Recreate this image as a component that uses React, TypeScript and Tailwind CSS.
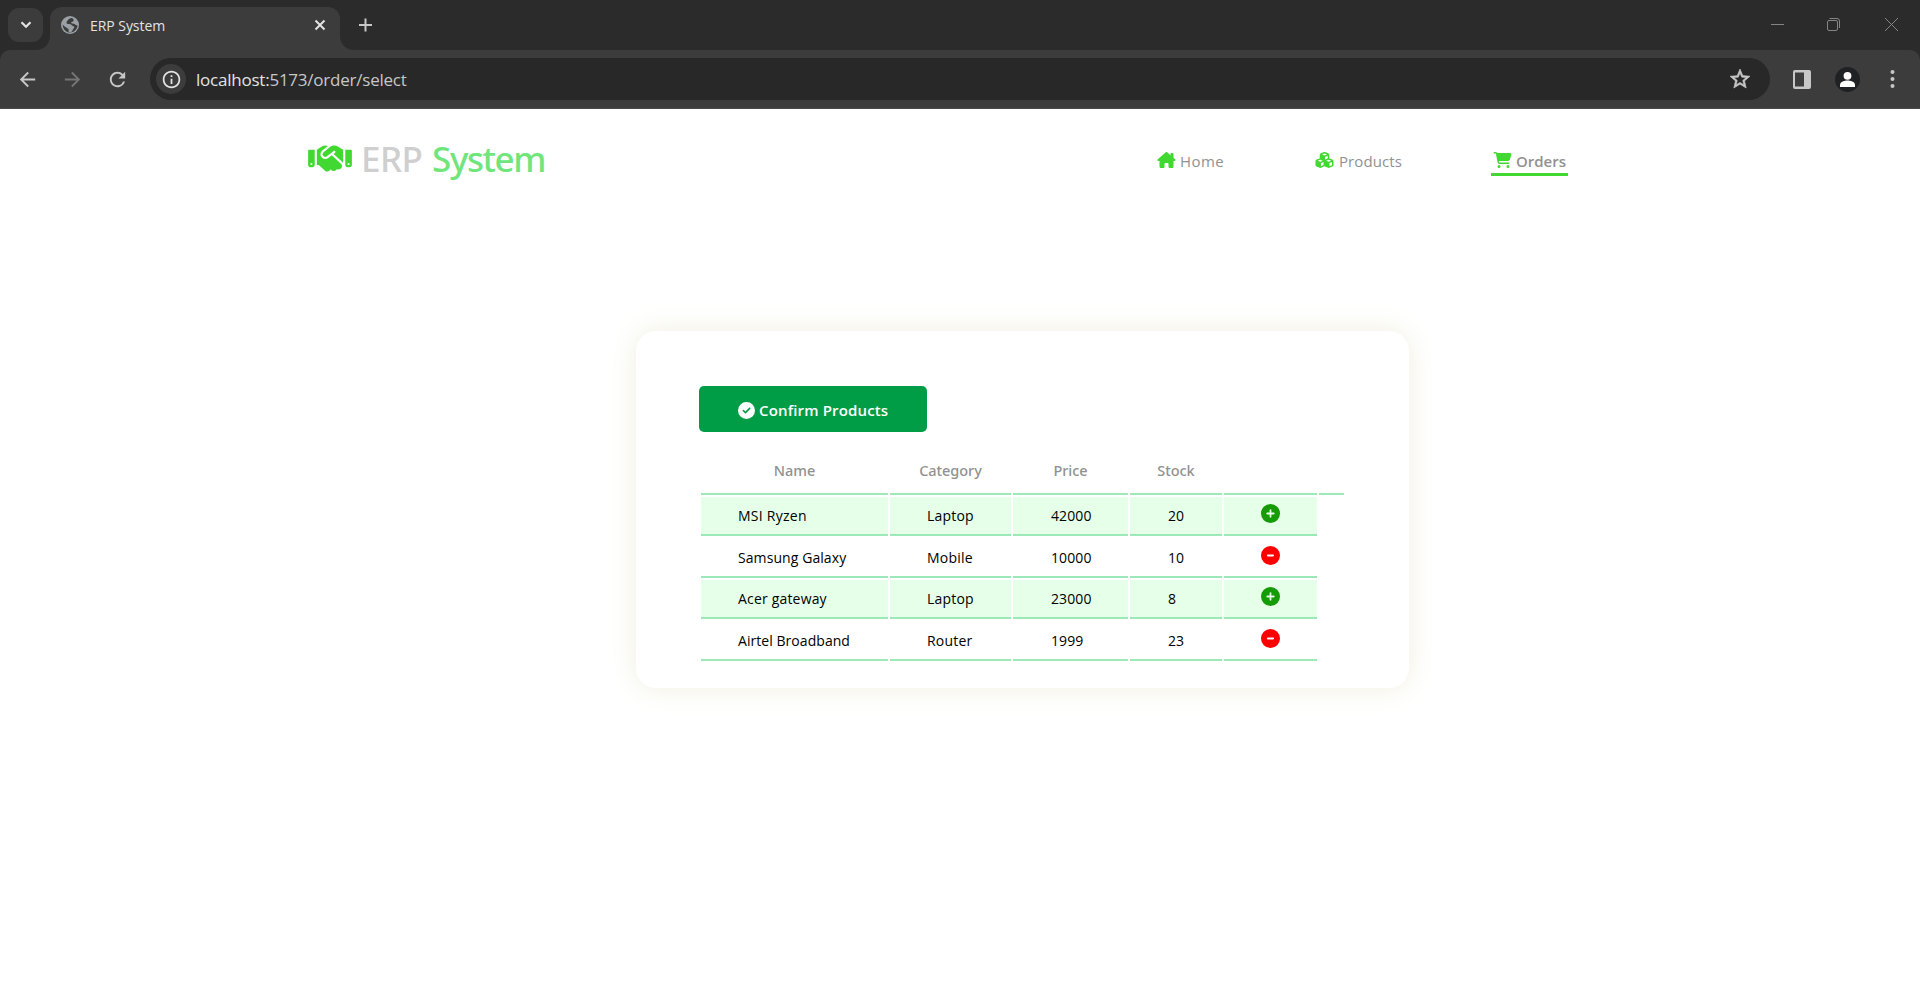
import { FaHandshake, FaHouseChimney, FaCubes, FaCartShopping, FaCircleCheck, FaCirclePlus, FaCircleMinus } from "react-icons/fa6";
import { MdOutlineInfo, MdRefresh, MdStarOutline, MdArrowBack, MdArrowForward } from "react-icons/md";

type Product = { name: string; category: string; price: string; stock: string; added: boolean; tracking: string };

const products: Product[] = [
  { name: "MSI Ryzen", category: "Laptop", price: "42000", stock: "20", added: false, tracking: "tracking-[0.25px]" },
  { name: "Samsung Galaxy", category: "Mobile", price: "10000", stock: "10", added: true, tracking: "tracking-[0.08px]" },
  { name: "Acer gateway", category: "Laptop", price: "23000", stock: "8", added: false, tracking: "tracking-[0.18px]" },
  { name: "Airtel Broadband", category: "Router", price: "1999", stock: "23", added: true, tracking: "tracking-[0.05px]" },
];

const columns = "grid grid-cols-[187px_121px_115px_92px_93px_25px] gap-x-[2px]";

function TitleBar() {
  return (
    <div className="flex h-[50px] bg-[#2b2b2b] pl-2">
      <button className="mt-2 flex h-[34px] w-[35px] items-center justify-center rounded-[11px] bg-[#3c3c3c]">
        <svg width="12" height="8" viewBox="0 0 12 8" fill="none" stroke="#e3e3e3" strokeWidth="2.2">
          <path d="M1.5 1.3 6 5.8l4.500-4.500" />
        </svg>
      </button>
      <div className="relative ml-[7px] mt-[7px] flex h-[43px] w-[290px] items-center rounded-t-[12px] bg-[#3c3c3c] pb-[7px] pl-[11px] pr-[14px]">
        <svg className="absolute bottom-0 -left-[14px]" width="14" height="14" fill="#3c3c3c"><path d="M14 0v14H0A14 14 0 0 0 14 0" /></svg>
        <svg className="absolute bottom-0 -right-[14px]" width="14" height="14" fill="#3c3c3c"><path d="M0 0v14h14A14 14 0 0 1 0 0" /></svg>
        <svg width="18" height="18" viewBox="0 0 18 18">
          <circle cx="9" cy="9" r="9" fill="#9aa0a6" />
          <path d="M10.500 2C8 2.600 7 4 6 5.200 5 6.500 5.500 7.800 7 8c1.500.2 3 0 3.800 1.200.6 1 2.200.6 2.500 1.800.2 1.400-1.300 1.600-1.600 2.900-.3 1.100-1.200 2-2.700 2.400L7.500 15.800c.3-1.800.4-2.600-.8-3.300C5.500 11.800 3.500 11 1.800 8.600 1.600 12 3.500 15 7 16.300c5 1.200 9.500-2.600 9.500-7-1.300 0-2.200-.5-3-1.300-1-.7-3.300-.3-3.400-1.300-.1-1.100 2.400-.9 2.600-1.900C12.800 3.300 12 2.300 10.500 2Z" fill="#3c3c3c" />
        </svg>
        <span className="ml-[11px] mt-px flex-1 text-[14px] leading-5 tracking-[-0.05px] text-[#e3e3e3]">ERP System</span>
        <svg width="12" height="12" viewBox="0 0 12 12" stroke="#e3e3e3" strokeWidth="2"><path d="m1.500 1.500 9 9m0-9-9 9" /></svg>
      </div>
      <svg className="ml-[19px] mt-[18px]" width="13" height="14" viewBox="0 0 13 14" stroke="#c7c7c7" strokeWidth="2"><path d="M6.500.5v13M0 7h13" /></svg>
      <div className="ml-auto flex items-start pr-[22px] pt-[18px]">
        <svg width="13" height="13" viewBox="0 0 13 13" stroke="#858585"><path d="M0 6.500h13" /></svg>
        <svg className="ml-[43px]" width="13" height="13" viewBox="0 0 13 13" fill="none" stroke="#858585">
          <rect x=".5" y="2.500" width="10" height="10" rx="1.500" />
          <path d="M2.500.5H10A2.500 2.500 0 0 1 12.500 3v7" />
        </svg>
        <svg className="ml-[45px]" width="13" height="13" viewBox="0 0 13 13" stroke="#858585"><path d="m0 0 13 13M13 0 0 13" /></svg>
      </div>
    </div>
  );
}

function Toolbar() {
  return (
    <div className="bg-[#2b2b2b]">
      <div className="flex h-[59px] items-center rounded-t-[10px] border-b border-[#4a4a4a] bg-[#3c3c3c] pl-[16px] pr-[17px]">
        <MdArrowBack className="size-[23px] text-[#c7c7c7]" />
        <MdArrowForward className="ml-[22px] size-[23px] text-[#757575]" />
        <MdRefresh className="ml-[22px] size-[23px] text-[#c7c7c7]" />
        <div className="ml-[21px] flex h-[42px] w-[1620px] items-center rounded-full bg-[#282828] pl-[6px] pr-[18px]">
          <div className="flex size-[30px] items-center justify-center rounded-full bg-[#3c3c3c]">
            <MdOutlineInfo className="size-[21px] text-[#e3e3e3]" />
          </div>
          <span className="ml-[10px] mt-px flex-1 text-[17px] leading-6 tracking-[-0.23px] text-[#c7c7c7]">
            <span className="text-[#e3e3e3]">localhost:</span>5173/order/select
          </span>
          <MdStarOutline className="size-[24px] text-[#c7c7c7]" stroke="#c7c7c7" strokeWidth="0.6" />
        </div>
        <svg className="ml-[23px]" width="18" height="19" viewBox="0 0 18 19">
          <rect width="18" height="19" rx="2" fill="#c7c7c7" />
          <path d="M2 2.500h9v14H2z" fill="#3c3c3c" />
        </svg>
        <svg className="ml-[24px]" width="25" height="25" viewBox="0 0 25 25">
          <circle cx="12.500" cy="12.500" r="12.500" fill="#202124" />
          <circle cx="12.500" cy="8.800" r="3.900" fill="#fff" />
          <path d="M5 20v-2.200c0-3 5-4.200 7.500-4.200s7.500 1.200 7.500 4.200V20z" fill="#fff" />
        </svg>
        <svg className="ml-[30px]" width="5" height="18" viewBox="0 0 5 18" fill="#c7c7c7">
          <circle cx="2.500" cy="2" r="2" /><circle cx="2.500" cy="9" r="2" /><circle cx="2.500" cy="16" r="2" />
        </svg>
      </div>
    </div>
  );
}

function SiteHeader() {
  return (
    <header className="flex h-[101px] pl-[308px] text-[#919191]">
      <div className="flex h-[99px] w-[849px] items-center">
        <FaHandshake className="h-[35px] w-[44px] text-[#41d832]" />
        <h1 className="ml-[9px] font-['Noto_Sans',sans-serif] text-[35px] font-medium leading-[48px]">
          <span className="tracking-[-0.5px] text-[#cfcfcf]">ERP </span>
          <span className="ml-px tracking-[-1.400px] text-[#70e57c]">System</span>
        </h1>
      </div>
      <nav className="flex pt-[39px] text-[15px] leading-[26px]">
        <a className="flex h-6 w-[158px]">
          <FaHouseChimney className="mt-1 h-4 w-[19px] text-[#41d832]" />
          <span className="ml-[4px] tracking-[0.4px]">Home</span>
        </a>
        <a className="flex h-6 w-[176px]">
          <FaCubes className="mt-1 h-4 w-[19px] text-[#41d832]" />
          <span className="ml-[5px] tracking-[0.100px]">Products</span>
        </a>
        <a className="flex h-7 w-[77px] border-b-[3px] border-[#41d832] pl-[2px]">
          <FaCartShopping className="mt-1 h-4 w-[19px] text-[#41d832]" />
          <span className="ml-[4px] font-semibold">Orders</span>
        </a>
      </nav>
    </header>
  );
}

function ProductTable() {
  const line = "border-b-2 border-[#9be9b6]";
  return (
    <div className="ml-[2px] mt-[12px]">
      <div className={columns + " mb-[2px] text-center font-['Noto_Sans',sans-serif] text-[14.500px] font-medium leading-[52px] tracking-[-0.050px] text-[#919191]"}>
        {["Name", "Category", "Price", "Stock", "", ""].map((label, i) => (
          <div key={i} className={line + " h-[51px]"}>{label}</div>
        ))}
      </div>
      <div className="flex flex-col gap-[2px]">
        {products.map((p, i) => {
          const cell = line + (i % 2 ? " flex h-[40px] items-center pt-[2px] pl-[37px]" : " flex h-[39px] items-center bg-[#e6ffe8] pl-[37px]");
          const numeric = cell + " tracking-[0.1px] indent-px";
          const icon = i % 2 ? "mb-[5px] size-[19px]" : "mb-[4px] size-[19px]";
          return (
            <div key={p.name} className={columns + " text-[14px] leading-5 text-black"}>
              <div className={cell + " " + p.tracking}>{p.name}</div>
              <div className={cell + " tracking-[0.2px]"}>{p.category}</div>
              <div className={numeric}>{p.price}</div>
              <div className={numeric}>{p.stock}</div>
              <div className={cell}>
                {p.added ? <FaCircleMinus className={icon + " text-[#ff0000]"} /> : <FaCirclePlus className={icon + " text-[#159b06]"} />}
              </div>
            </div>
          );
        })}
      </div>
    </div>
  );
}

export default function App() {
  return (
    <div className="h-[992px] overflow-hidden bg-white font-['Open_Sans','Noto_Sans',sans-serif]">
      <TitleBar />
      <Toolbar />
      <SiteHeader />
      <main className="ml-[636px] mt-[121px] h-[357px] w-[773px] rounded-[20px] bg-white pl-[63px] pt-[55px] shadow-[0_0_30px_#f0efe0]">
        <button className="flex h-[46px] w-[228px] items-center rounded-[5px] bg-[#009d46] pl-[39px] font-semibold text-white">
          <FaCircleCheck className="mt-[2px] size-[17px]" />
          <span className="ml-[4px] mt-[2px] text-[15px] leading-6 tracking-[0.15px]">Confirm Products</span>
        </button>
        <ProductTable />
      </main>
    </div>
  );
}
